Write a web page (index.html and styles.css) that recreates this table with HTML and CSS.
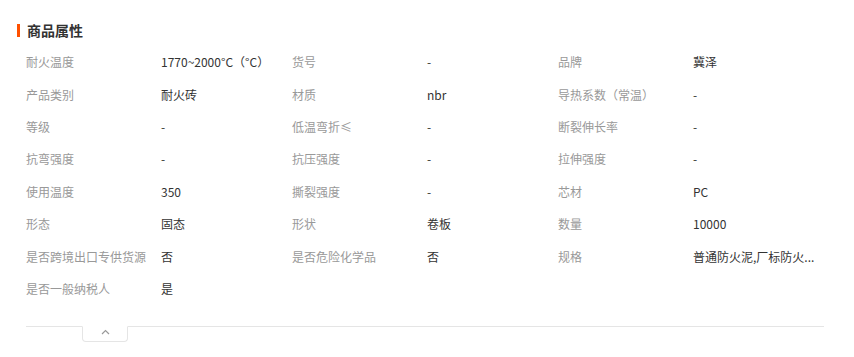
FILE: index.html
```html
<!DOCTYPE html>
<html lang="zh">
<head>
<meta charset="utf-8">
<link rel="stylesheet" href="styles.css">
</head>
<body>
<div class="panel">
  <div class="header"><span class="bar"></span><h2 class="title">商品属性</h2></div>
  <div class="grid">
    <div class="lbl">耐火温度</div><div class="val">1770~2000°C（°C）</div>
    <div class="lbl">货号</div><div class="val">-</div>
    <div class="lbl">品牌</div><div class="val">冀泽</div>

    <div class="lbl">产品类别</div><div class="val">耐火砖</div>
    <div class="lbl">材质</div><div class="val">nbr</div>
    <div class="lbl">导热系数（常温）</div><div class="val">-</div>

    <div class="lbl">等级</div><div class="val">-</div>
    <div class="lbl">低温弯折≤</div><div class="val">-</div>
    <div class="lbl">断裂伸长率</div><div class="val">-</div>

    <div class="lbl">抗弯强度</div><div class="val">-</div>
    <div class="lbl">抗压强度</div><div class="val">-</div>
    <div class="lbl">拉伸强度</div><div class="val">-</div>

    <div class="lbl">使用温度</div><div class="val">350</div>
    <div class="lbl">撕裂强度</div><div class="val">-</div>
    <div class="lbl">芯材</div><div class="val">PC</div>

    <div class="lbl">形态</div><div class="val">固态</div>
    <div class="lbl">形状</div><div class="val">卷板</div>
    <div class="lbl">数量</div><div class="val">10000</div>

    <div class="lbl">是否跨境出口专供货源</div><div class="val">否</div>
    <div class="lbl">是否危险化学品</div><div class="val">否</div>
    <div class="lbl">规格</div><div class="val">普通防火泥,厂标防火...</div>

    <div class="lbl">是否一般纳税人</div><div class="val">是</div>
  </div>
  <div class="footer">
    <div class="toggle">
      <svg width="9" height="6" viewBox="0 0 9 6"><path d="M1 5 L4.5 1.5 L8 5" fill="none" stroke="#999" stroke-width="1.2"/></svg>
    </div>
  </div>
</div>
</body>
</html>
```

FILE: styles.css
```css
html, body {
  margin: 0;
  padding: 0;
  background: #fff;
}
body {
  font-family: "Noto Sans CJK SC", "Noto Sans", sans-serif;
  font-size: 12px;
  color: #333;
}
.panel {
  padding: 20px 30px 0 17px;
  width: 807px;
}
.header {
  display: flex;
  align-items: center;
  gap: 7px;
  height: 20px;
}
.bar {
  width: 3px;
  height: 13px;
  background: #ff5000;
}
.title {
  margin: 0;
  font-size: 14px;
  font-weight: bold;
  color: #333;
  line-height: 20px;
}
.grid {
  margin-top: 6px;
  padding-left: 9px;
  display: grid;
  grid-template-columns: 135px 131px 135px 131px 135px 131px;
  grid-auto-rows: 32.4px;
  align-items: center;
}
.lbl {
  color: #999;
  line-height: 18px;
  white-space: nowrap;
}
.val {
  color: #333;
  line-height: 18px;
  white-space: nowrap;
}
.footer {
  margin-top: 21px;
  margin-left: 9px;
  width: 798px;
  border-top: 1px solid #e5e5e5;
  height: 20px;
}
.toggle {
  margin-left: 56px;
  margin-top: -1px;
  width: 46px;
  height: 16px;
  border: 1px solid #e5e5e5;
  border-top: 1px solid #fff;
  border-radius: 0 0 4px 4px;
  box-sizing: border-box;
  display: flex;
  justify-content: center;
  align-items: flex-start;
  padding-top: 2px;
}
```
